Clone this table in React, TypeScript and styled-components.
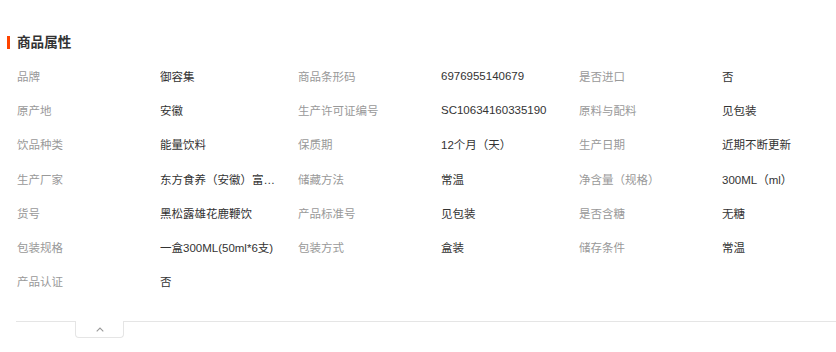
import React from 'react';
import styled, { createGlobalStyle } from 'styled-components';

const GlobalStyle = createGlobalStyle`
  html, body {
    margin: 0;
    padding: 0;
    background: #fff;
  }
  body {
    font-family: "Liberation Sans", "Noto Sans CJK SC", sans-serif;
    overflow: hidden;
  }
`;

const Section = styled.section`
  width: 836px;
  padding-top: 33px;
`;

const Title = styled.h3`
  position: relative;
  margin: 0 0 6px 0;
  padding-left: 17px;
  font-size: 13.6px;
  line-height: 20px;
  font-weight: bold;
  color: #333;

  &::before {
    content: "";
    position: absolute;
    left: 7px;
    top: 3px;
    width: 3px;
    height: 13px;
    background: #ff4400;
  }
`;

const Table = styled.div`
  padding-left: 17px;
  padding-bottom: 23px;
`;

const Row = styled.div`
  display: flex;
  height: 34.2px;
  align-items: center;
`;

const Label = styled.span`
  flex: 0 0 143px;
  font-size: 11.5px;
  color: #999;
  white-space: nowrap;
`;

const Value = styled.span`
  flex: 0 0 118px;
  margin-right: 20px;
  font-size: 11.5px;
  color: #333;
  white-space: nowrap;
  overflow: hidden;
  text-overflow: ellipsis;
`;

const Footer = styled.div`
  margin-left: 16px;
  border-top: 1px solid #e5e5e5;
  height: 30px;
`;

const Toggle = styled.button`
  display: flex;
  align-items: center;
  justify-content: center;
  margin: -1px 0 0 59px;
  width: 49px;
  height: 17px;
  padding: 0;
  background: #fff;
  border: 1px solid #e5e5e5;
  border-top: none;
  border-radius: 0 0 4px 4px;
  cursor: pointer;
`;

type Attr = [string, string];

const rows: Attr[][] = [
  [['品牌', '御容集'], ['商品条形码', '6976955140679'], ['是否进口', '否']],
  [['原产地', '安徽'], ['生产许可证编号', 'SC10634160335190'], ['原料与配料', '见包装']],
  [['饮品种类', '能量饮料'], ['保质期', '12个月（天）'], ['生产日期', '近期不断更新']],
  [['生产厂家', '东方食养（安徽）富硒生物科技有限公司'], ['储藏方法', '常温'], ['净含量（规格）', '300ML（ml）']],
  [['货号', '黑松露雄花鹿鞭饮'], ['产品标准号', '见包装'], ['是否含糖', '无糖']],
  [['包装规格', '一盒300ML(50ml*6支)'], ['包装方式', '盒装'], ['储存条件', '常温']],
  [['产品认证', '否']],
];

export default function App() {
  return (
    <>
      <GlobalStyle />
      <Section>
        <Title>商品属性</Title>
        <Table>
          {rows.map((row, i) => (
            <Row key={i}>
              {row.map(([label, value]) => (
                <React.Fragment key={label}>
                  <Label>{label}</Label>
                  <Value>{value}</Value>
                </React.Fragment>
              ))}
            </Row>
          ))}
        </Table>
        <Footer>
          <Toggle aria-label="收起">
            <svg width="8" height="5" viewBox="0 0 8 5" fill="none">
              <path d="M0.7 4.3 L4 1 L7.3 4.3" stroke="#999" strokeWidth="1.1" />
            </svg>
          </Toggle>
        </Footer>
      </Section>
    </>
  );
}
